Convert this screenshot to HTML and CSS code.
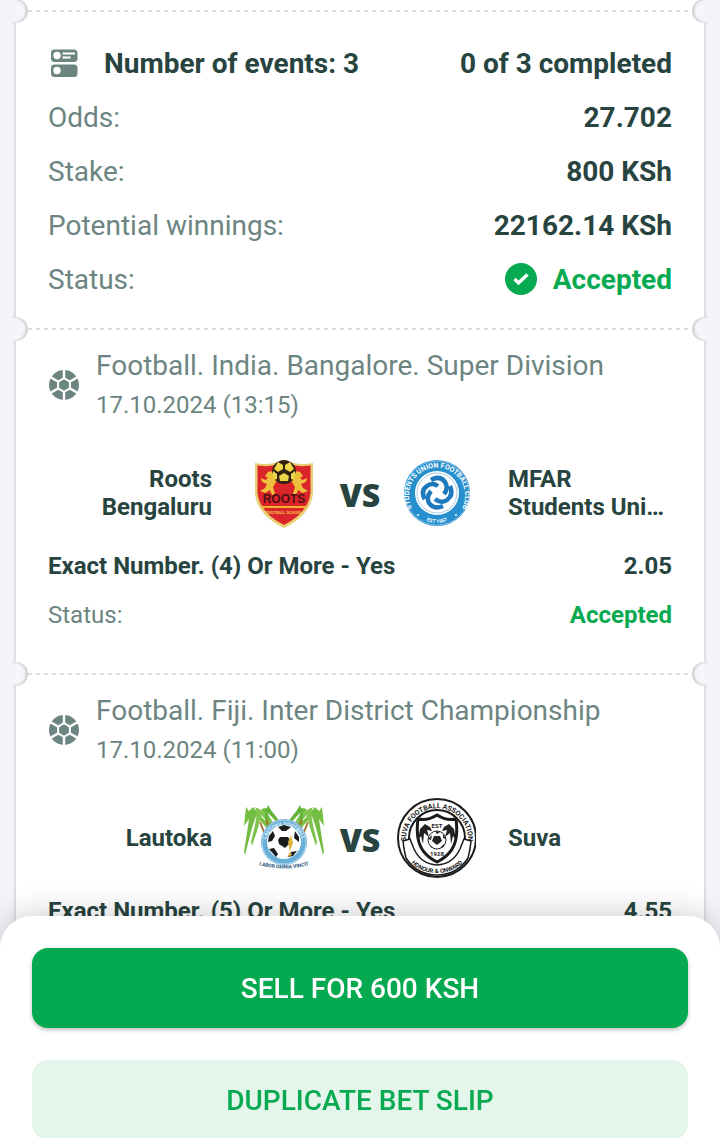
FILE: index.html
```html
<!DOCTYPE html>
<html lang="en">
<head>
  <meta charset="UTF-8">
  <meta name="viewport" content="width=device-width, initial-scale=1.0">
  <title>Bet slip</title>
  <link rel="stylesheet" href="styles.css">
</head>
<body>
  <!-- Shared icons -->
  <svg class="sprite" aria-hidden="true">
    <symbol id="icon-ball" viewBox="0 0 32 32">
      <circle cx="16" cy="16" r="15" fill="#6c8581"/>
      <path d="M16 9.200l5.900 3.400v6.800L16 22.800l-5.900-3.400v-6.800z" fill="#6c8581" stroke="#fff" stroke-width="2"/>
      <path d="M16 9V0M22 12.500l8-4.600M22 19.500l8 4.600M16 23v9M10 19.500l-8 4.600M10 12.500L2 7.900" stroke="#fff" stroke-width="2.400"/>
    </symbol>
  </svg>

  <main class="ticket">
    <div class="tear"></div>

    <section class="summary">
      <div class="row">
        <span class="row-title">
          <svg class="icon" viewBox="0 0 32 32" aria-hidden="true">
            <rect x="3" y="2.500" width="26.500" height="12.500" rx="3.500" fill="#6c8581"/>
            <rect x="3" y="17.500" width="26.500" height="12.500" rx="3.500" fill="#6c8581"/>
            <circle cx="9" cy="8.500" r="3.700" fill="#fff"/>
            <circle cx="9" cy="23.500" r="3.700" fill="#fff"/>
            <path d="M14.500 6.500H27M14.500 10.500h8" stroke="#fff" stroke-width="2.200"/>
          </svg>
          Number of events: 3
        </span>
        <span class="value">0 of 3 completed</span>
      </div>
      <div class="row"><span>Odds:</span><span class="value">27.702</span></div>
      <div class="row"><span>Stake:</span><span class="value">800 KSh</span></div>
      <div class="row"><span>Potential winnings:</span><span class="value">22162.14 KSh</span></div>
      <div class="row">
        <span>Status:</span>
        <span class="value accepted">
          <svg class="icon" viewBox="0 0 32 32" aria-hidden="true">
            <circle cx="16" cy="16" r="16" fill="#07aa50"/>
            <path d="M9.500 16l4 4 9-8.500" fill="none" stroke="#fff" stroke-width="3.400"/>
          </svg>
          Accepted
        </span>
      </div>
    </section>

    <div class="tear"></div>

    <section class="event">
      <header class="event-head">
        <svg class="icon" aria-hidden="true"><use href="#icon-ball"/></svg>
        <div>
          <h2>Football. India. Bangalore. Super Division</h2>
          <time datetime="2024-10-17T13:15">17.10.2024 (13:15)</time>
        </div>
      </header>
      <div class="teams">
        <span class="team home">Roots<br>Bengaluru</span>
        <svg class="crest" viewBox="0 0 80 80" aria-hidden="true">
          <path d="M11 10Q26 13 40 7Q54 13 69 10V40Q67 62 40 75Q13 62 11 40Z" fill="#e9ce72"/>
          <path d="M13.500 12.500Q27 15 40 10Q53 15 66.500 12.500V40Q64 60 40 72Q16 60 13.500 40Z" fill="#dc252b"/>
          <g fill="#eebf3c">
            <path d="M31 22l-4-4-3 1-3 4 3 2-3 2-4-2 1 4 5 2-2 4-5 3 5 2 5-3 2 5 3-1-2-7 3-5 4-2-1-2-4 1z"/>
            <path d="M49 22l4-4 3 1 3 4-3 2 3 2 4-2-1 4-5 2 2 4 5 3-5 2-5-3-2 5-3-1 2-7-3-5-4-2 1-2 4 1z"/>
          </g>
          <circle cx="40" cy="19" r="12" fill="#35210f"/>
          <g fill="#ecd64a">
            <path d="M34 9l5 3v4l-5 3-4-3zM46 9l-5 3v4l5 3 4-3zM29 18l4 3v5l-3 1-2-5zM51 18l-4 3v5l3 1 2-5zM40 20l5 3-1 5h-8l-1-5z"/>
          </g>
          <text x="40" y="50" class="roots-name">ROOTS</text>
          <path d="M17 53H63L62 55H18Z" fill="#efb32e"/>
          <text x="40" y="61" class="roots-sub">FOOTBALL SCHOOL</text>
        </svg>
        <span class="versus">VS</span>
        <svg class="crest" viewBox="0 0 80 80" aria-hidden="true">
          <defs>
            <path id="sufc-top" d="M19 60A28 28 0 1 1 63 60"/>
            <path id="sufc-bottom" d="M25 65Q41 75 57 65"/>
          </defs>
          <circle cx="41" cy="40" r="33" fill="#268fce"/>
          <circle cx="41" cy="40" r="32" fill="none" stroke="#7ebce3" stroke-width="1"/>
          <circle cx="41" cy="40" r="22" fill="#fff"/>
          <circle cx="41" cy="40" r="20" fill="none" stroke="#a9cce5" stroke-width="1"/>
          <text class="sufc-text"><textPath href="#sufc-top" startOffset="50%">STUDENTS UNION FOOTBALL CLUB</textPath></text>
          <text class="sufc-est"><textPath href="#sufc-bottom" startOffset="50%">EST 1957</textPath></text>
          <circle cx="22" cy="62" r="1" fill="#fff"/>
          <circle cx="60" cy="62" r="1" fill="#fff"/>
          <g fill="none" stroke="#1c79bd" stroke-width="4.500">
            <path d="M29 46Q24 38 31 33Q36 29 42 33"/>
            <path d="M35 27Q44 22 49 29Q53 35 48 41"/>
            <path d="M54 33Q58 42 51 47Q45 51 39 46"/>
            <path d="M47 53Q38 57 33 50Q30 44 35 38"/>
          </g>
        </svg>
        <span class="team">MFAR<br>Students Uni…</span>
      </div>
      <div class="row pick"><span>Exact Number. (4) Or More - Yes</span><span>2.05</span></div>
      <div class="row small"><span>Status:</span><span class="accepted">Accepted</span></div>
    </section>

    <div class="tear"></div>

    <section class="event">
      <header class="event-head">
        <svg class="icon" aria-hidden="true"><use href="#icon-ball"/></svg>
        <div>
          <h2>Football. Fiji. Inter District Championship</h2>
          <time datetime="2024-10-17T11:00">17.10.2024 (11:00)</time>
        </div>
      </header>
      <div class="teams">
        <span class="team home">Lautoka</span>
        <svg class="crest" viewBox="0 0 80 80" aria-hidden="true">
          <defs>
            <path id="lautoka-top" d="M24 57A19 19 0 1 1 56 57"/>
            <path id="lautoka-bottom" d="M12 66Q40 75 68 66"/>
            <!-- Sugar cane leaves, mirrored for the right side -->
            <g id="cane">
              <path d="M27 42L21 28 12 18 8 30 1 57 0 54 4 28 5 21 0 28 2 9 5 13 9 9 14 15 23 25 30 38z" fill="#72bd42"/>
              <path d="M30 34L22 22 17 17 14 30 8 48 7 44 11 27 13 15 11 9 17 12 20 10 25 18 32 29z" fill="#7fc44e"/>
              <path d="M34 26L27 18 24 15 25 31 21 22 21 13 18 11 23 10 24 7 27 12 37 25z" fill="#66b53a"/>
              <path d="M16 24L24 44M22 22L29 34" stroke="#a87a37" stroke-width="2"/>
            </g>
          </defs>
          <use href="#cane"/>
          <use href="#cane" transform="translate(80) scale(-1 1)"/>
          <circle cx="40" cy="44" r="23" fill="#68afd9"/>
          <circle cx="40" cy="44" r="22" fill="none" stroke="#b3d6e9" stroke-width="1"/>
          <text class="lautoka-ring"><textPath href="#lautoka-top" startOffset="50%">LAUTOKA FOOTBALL</textPath></text>
          <circle cx="40" cy="44" r="17" fill="#fff"/>
          <g fill="#171c1c">
            <path d="M36 39h8l3 5-6 6-6-4-1-4z"/>
            <path d="M34 29l6-2 7 2-5 4h-4zM25 38l4-5 2 5-3 5-4 1zM25 51l5-1 4 6-2 3zM44 59l3-5 6-1-4 5zM51 33l4 6v5l-5-4z"/>
          </g>
          <path d="M47 37l2 8-3 8 2 4-5 2 3-5-2-10z" fill="#ddb23c"/>
          <text class="lautoka-motto"><textPath href="#lautoka-bottom" startOffset="50%">LABOR OMNIA VINCIT</textPath></text>
        </svg>
        <span class="versus">VS</span>
        <svg class="crest" viewBox="0 0 80 80" aria-hidden="true">
          <defs>
            <path id="suva-top" d="M11 49A31 31 0 1 1 71 49"/>
            <path id="suva-bottom" d="M10 57Q19 75 41 75Q63 75 72 57"/>
          </defs>
          <circle cx="41" cy="40" r="39" fill="#fff" stroke="#1b1b1b" stroke-width="2"/>
          <circle cx="41" cy="40" r="28" fill="none" stroke="#1b1b1b" stroke-width="2"/>
          <text class="suva-text"><textPath href="#suva-top" startOffset="50%">SUVA FOOTBALL ASSOCIATION</textPath></text>
          <path d="M8 51L7 43 14 41 18 51Q25 66 41 67Q57 66 64 51L68 41 75 43 74 51 72 60Q61 77 41 77Q21 77 10 60Z" fill="#fff" stroke="#1b1b1b" stroke-width="1.500"/>
          <path d="M22 21Q32 23 41 17Q50 23 60 21Q63 43 54 54Q49 60 41 64Q33 60 28 54Q19 43 22 21Z" fill="#fff" stroke="#1b1b1b" stroke-width="3"/>
          <path d="M24 31l5-5 5 3 2 4-5-1 2 7-5-4-1 11-2-8-3 4zM58 31l-5-5-5 3-2 4 5-1-2 7 5-4 1 11 2-8 3 4z" fill="#222"/>
          <text x="41" y="30" class="suva-year">EST</text>
          <circle cx="41" cy="42" r="9" fill="#fff" stroke="#222" stroke-width="1"/>
          <path d="M38 38h6l2 5-5 4-5-4zM39 33l5 1-3 2zM32 41l4-4-1 5zM47 36l3 5-3-1zM35 48l3 2-4-1zM44 50l4-4v3z" fill="#222"/>
          <text x="41" y="58" class="suva-year">1928</text>
          <text class="suva-motto"><textPath href="#suva-bottom" startOffset="50%">HONOUR &amp; ONWARD</textPath></text>
        </svg>
        <span class="team">Suva</span>
      </div>
      <div class="row pick"><span>Exact Number. (5) Or More - Yes</span><span>4.55</span></div>
    </section>
  </main>

  <footer class="actions">
    <button type="button" class="btn btn-primary">SELL FOR 600 KSH</button>
    <button type="button" class="btn btn-secondary">DUPLICATE BET SLIP</button>
  </footer>
</body>
</html>
```

FILE: styles.css
```css
/* General Styles */
* {
  box-sizing: border-box;
}

body {
  margin: 0;
  height: 100vh;
  overflow: hidden;
  background: #f4f5fa;
  color: #284440;
  font-family: Roboto, sans-serif;
  font-size: 28px;
}

.sprite {
  display: none;
}

.icon {
  width: 32px;
  height: 32px;
  flex: none;
}

/* Ticket */
.ticket {
  min-height: 100vh;
  margin: 0 16px;
  padding-top: 10px;
  background: #fff;
  box-shadow: 0 0 4px rgba(0, 0, 0, 0.25);
}

.tear {
  position: relative;
  height: 2px;
  margin: 0 12px;
  background: repeating-linear-gradient(90deg, #dedede 0, #dedede 4px, transparent 4px, transparent 8px);
}

/* Half-round notches over the ticket edges */
.tear::before,
.tear::after {
  content: "";
  position: absolute;
  top: -11px;
  width: 16px;
  height: 24px;
  background: #f5f6fa;
}

.tear::before {
  left: -16px;
  border-radius: 0 12px 12px 0;
  box-shadow: inset -2px 0 3px rgba(0, 0, 0, 0.18);
}

.tear::after {
  right: -16px;
  border-radius: 12px 0 0 12px;
  box-shadow: inset 2px 0 3px rgba(0, 0, 0, 0.18);
}

/* Rows */
.row {
  display: flex;
  justify-content: space-between;
  align-items: center;
  height: 54px;
  color: #6c8581;
}

.row-title,
.value {
  display: flex;
  align-items: center;
  color: #284440;
  font-weight: 700;
}

.row-title {
  gap: 24px;
}

.value {
  gap: 16px;
}

.row .accepted {
  color: #07aa50;
  font-weight: 700;
}

.summary {
  padding: 24px 32px 22px;
}

/* Events */
.event {
  padding: 16px 32px 34px;
}

.event-head {
  display: flex;
  align-items: center;
  gap: 16px;
  color: #6c8581;
}

.event-head h2 {
  margin: 0;
  font-size: 28px;
  font-weight: 400;
  line-height: 40px;
}

.event-head time {
  display: block;
  font-size: 24px;
  line-height: 38px;
}

.teams {
  display: grid;
  grid-template-columns: 1fr 80px 72px 80px 1fr;
  align-items: center;
  margin: 29px 0 8px;
}

.team {
  padding-left: 32px;
  font-size: 24px;
  font-weight: 700;
  line-height: 28px;
  white-space: nowrap;
}

.team.home {
  padding: 0 32px 0 0;
  text-align: right;
}

.crest {
  width: 80px;
  height: 80px;
}

.versus {
  padding-top: 4px;
  font-family: "Open Sans", sans-serif;
  font-size: 32px;
  font-weight: 800;
  line-height: 40px;
  text-align: center;
}

.row.pick,
.row.small {
  height: 49px;
  font-size: 24px;
}

.row.pick {
  color: #284440;
  font-weight: 700;
}

/* Crest lettering */
.crest text {
  font-family: Roboto, sans-serif;
  font-weight: 700;
  text-anchor: middle;
}

.crest .roots-name {
  font-family: "Liberation Sans", sans-serif;
  font-size: 12px;
  fill: #4b1113;
}

.roots-sub {
  font-size: 4px;
  fill: #f2c14a;
}

.sufc-text {
  font-size: 7px;
  fill: #fff;
}

.sufc-est {
  font-size: 5px;
  fill: #fff;
}

.lautoka-ring {
  font-size: 5px;
  fill: #e4f2fa;
}

.lautoka-motto {
  font-size: 5px;
  fill: #25517c;
}

.suva-text {
  font-size: 7px;
  fill: #1b1b1b;
}

.suva-year,
.suva-motto {
  font-size: 6px;
  fill: #1b1b1b;
}

/* Bottom sheet */
.actions {
  position: fixed;
  right: 0;
  bottom: -2px;
  left: 0;
  display: flex;
  flex-direction: column;
  gap: 32px;
  padding: 32px 32px 0;
  border-radius: 32px 32px 0 0;
  background: #fff;
  box-shadow: 0 0 32px rgba(0, 0, 0, 0.22);
}

.btn {
  height: 80px;
  border: none;
  border-radius: 16px;
  font-family: inherit;
  font-size: 28px;
  font-weight: 500;
  cursor: pointer;
}

.btn-primary {
  background: #04a950;
  color: #fff;
  box-shadow: 0 2px 4px rgba(0, 0, 0, 0.25);
}

.btn-secondary {
  background: #e4f5eb;
  color: #07aa50;
}
```
